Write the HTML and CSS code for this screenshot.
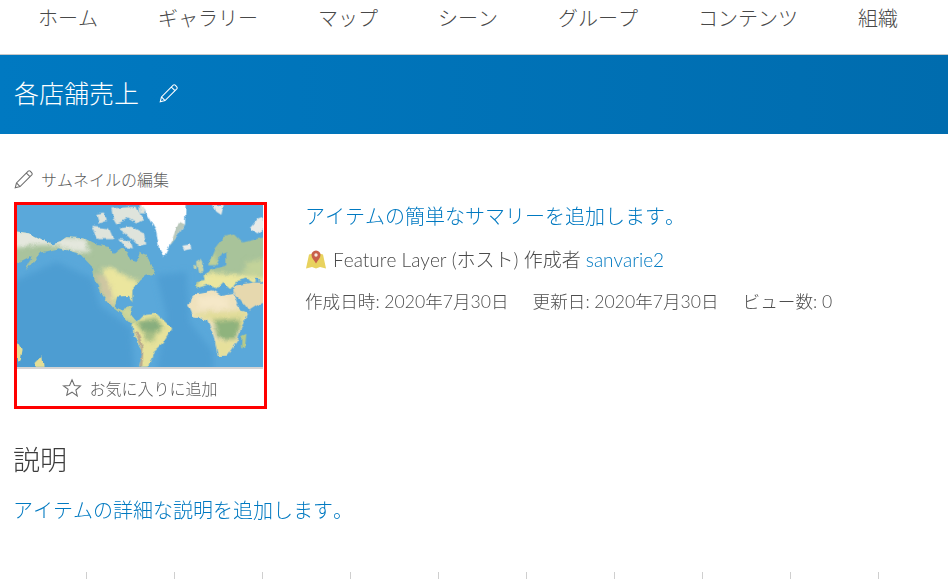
FILE: index.html
```
<!DOCTYPE html>
<html lang="ja">
<head>
<meta charset="utf-8">
<title>各店舗売上</title>
<link rel="stylesheet" href="styles.css">
</head>
<body>
<nav class="topnav">
  <a>ホーム</a><a>ギャラリー</a><a>マップ</a><a>シーン</a><a>グループ</a><a>コンテンツ</a><a>組織</a>
</nav>
<header class="banner">
  <h1 class="title">各店舗売上</h1>
  <svg class="pencil pencil-light" viewBox="0 0 24 24"><path d="M2.500 21.500l1.300-5.200L16.600 3.500a1.600 1.600 0 0 1 2.200 0l1.700 1.700a1.600 1.600 0 0 1 0 2.200L7.700 20.200zM14.600 5.500l3.900 3.900M3.800 16.300l3.900 3.900"/></svg>
</header>
<main class="content">
  <div class="thumb-edit">
    <svg class="pencil pencil-gray" viewBox="0 0 24 24"><path d="M2.500 21.500l1.300-5.200L16.600 3.500a1.600 1.600 0 0 1 2.200 0l1.700 1.700a1.600 1.600 0 0 1 0 2.200L7.700 20.200zM14.600 5.500l3.900 3.900M3.800 16.300l3.900 3.900"/></svg>
    <span>サムネイルの編集</span>
  </div>
  <section class="overview">
    <div class="card">
      <svg class="map" viewBox="52 120 738 485" preserveAspectRatio="none">
        <defs>
          <clipPath id="naClip"><path d="M40 198L90 205 130 225 160 238 178 232 200 216 250 220 290 240 330 246 345 266 368 250 385 262 395 285 412 290 420 262 442 272 466 325 440 332 422 346 398 375 398 412 388 392 352 394 345 428 370 440 384 420 400 425 392 448 412 470 400 482 372 452 340 428 302 382 284 340 280 308 240 266 180 250 122 262 78 318 96 272 40 300Z"/></clipPath>
          <clipPath id="afClip"><path d="M566 420L572 402 592 384 640 375 668 392 702 386 722 440 745 445 722 495 715 522 682 570 655 572 642 510 622 462 582 456Z"/></clipPath>
          <clipPath id="saClip"><path d="M398 482L430 450 470 445 518 490 492 530 462 558 445 605H418L428 560 402 510Z"/></clipPath>
          <clipPath id="euClip"><path d="M800 215L730 232 706 208 672 215 645 250 625 300 650 300 665 268 680 262 680 300 640 312 612 330 615 348 590 350 590 370 625 358 650 370 668 350 692 372 710 348 740 340 760 352 800 345Z"/></clipPath>
          <filter id="coast" x="-5%" y="-5%" width="110%" height="110%">
            <feTurbulence type="fractalNoise" baseFrequency="0.04" numOctaves="4" seed="7" result="n"/>
            <feDisplacementMap in="SourceGraphic" in2="n" scale="13" xChannelSelector="R" yChannelSelector="G"/>
            <feGaussianBlur stdDeviation="1.500"/>
          </filter>
          <filter id="blurA"><feGaussianBlur stdDeviation="9"/></filter>
          <filter id="blurB" x="-20%" y="-20%" width="140%" height="140%"><feGaussianBlur stdDeviation="7"/></filter>
        </defs>
        <rect x="52" y="120" width="738" height="485" fill="#5aa8da"/>
        <path fill="#4e9dd2" filter="url(#blurA)" d="M40 350L170 290 280 340 300 420 395 490 405 620H40Z"/>
        <path fill="#4f9ed3" filter="url(#blurA)" d="M470 330L560 320 570 470 640 560 640 620H470L500 450Z"/>
        <g filter="url(#coast)">
          <g clip-path="url(#naClip)">
            <rect x="40" y="190" width="440" height="300" fill="#a9c39d"/>
            <g filter="url(#blurB)">
              <path fill="#e4e7dd" d="M40 190H180V240L120 240 40 250ZM170 215L255 220 270 262 215 258 175 245Z"/>
              <path fill="#ebe69e" d="M305 308L345 312 390 340 418 345 405 380 395 420 345 400 345 425 320 400Z"/>
              <path fill="#cdd79a" d="M345 425L400 425 412 480 372 455Z"/>
            </g>
            <path fill="#cfc6a2" filter="url(#blurB)" d="M285 325L318 335 338 395 340 428 310 390Z"/>
          </g>
          <g fill="#dfe4dc">
            <path d="M290 150L312 145 322 168 298 176Z"/>
            <path d="M335 130L410 125 430 165 410 175 385 160 350 178 340 160Z"/>
            <path d="M278 185L328 190 342 222 296 222Z"/>
            <path d="M356 190L395 185 432 205 440 238 416 242 385 210Z"/>
            <path d="M358 222L392 225 400 250 378 246Z"/>
            <path d="M420 120H430L435 145H420Z"/>
          </g>
          <path fill="#fff" d="M420 110H558L556 178 532 215 510 240 492 276 478 250 470 200 450 165Z"/>
          <path fill="#b9c8bb" d="M538 170L556 178 532 215 512 240 526 200Z"/>
          <path fill="#e8ebe8" d="M640 120H672L665 150 650 140ZM750 190L775 160 790 155V195L770 205ZM548 242L572 238 575 252 555 256Z"/>
          <path fill="#c8d4a8" d="M592 292L606 284 612 318 598 322ZM582 300L592 300 590 312 582 312Z"/>
          <g clip-path="url(#euClip)">
            <rect x="580" y="200" width="230" height="180" fill="#a8c39a"/>
            <g filter="url(#blurB)">
              <path fill="#ebe79f" d="M585 385L612 322 700 328 800 335V385Z"/>
              <path fill="#c3d39a" d="M620 300L640 262 660 300ZM740 290L800 280V335L730 325Z"/>
            </g>
          </g>
          <path fill="#5aa8da" d="M732 344L748 342 746 352 732 352ZM768 338L778 338 776 362 768 360Z"/>
          <path fill="#e6d8ae" d="M700 362L760 352 800 352V410L776 418 748 436 720 400 702 385Z"/>
          <g clip-path="url(#afClip)">
            <rect x="550" y="365" width="210" height="215" fill="#efe2bd"/>
            <g filter="url(#blurB)">
              <path fill="#e2dd9a" d="M570 445L745 435V490L690 490 640 470Z"/>
              <path fill="#8fb37d" d="M640 468L722 460 712 520 688 522 655 520Z"/>
              <path fill="#e6e09b" d="M640 528L715 522 682 580H650Z"/>
              <path fill="#f5e8c8" d="M590 395L660 390 690 410 680 430 600 430Z"/>
            </g>
          </g>
          <path fill="#b7ca8a" d="M726 512L740 506 736 545 724 545Z"/>
          <g clip-path="url(#saClip)">
            <rect x="390" y="440" width="135" height="170" fill="#e6e29b"/>
            <g filter="url(#blurB)">
              <path fill="#88ae7e" d="M408 470L470 458 488 490 455 510 430 500Z"/>
              <path fill="#a9c086" d="M430 500L470 500 462 530 442 530Z"/>
            </g>
            <path fill="#bcac8e" d="M402 498L414 500 432 545 428 610 418 610 424 550Z"/>
          </g>
          <path fill="#e4de96" d="M52 528L66 552 60 585 52 592ZM108 592L128 572 132 605H108Z"/>
        </g>
      </svg>
      <div class="fav">
        <svg class="star" viewBox="0 0 24 24"><path d="M12 2.200l2.900 6.700 7.300.7-5.500 4.800 1.600 7.100L12 17l-6.300 3.700 1.600-7.100L1.800 9.600l7.300-.7z"/></svg>
        <span>お気に入りに追加</span>
      </div>
    </div>
    <div class="details">
      <a class="summary">アイテムの簡単なサマリーを追加します。</a>
      <p class="meta">
        <svg class="layer-icon" viewBox="0 0 22 20">
          <path fill="#e8d25e" d="M4 4.500L1 18.500 7 17 11 18.500 15 17 21 18.500 18 4.500 14 3.500H8Z"/>
          <path fill="#c8604a" d="M11 .5C8 .5 6.500 2.700 6.500 5c0 3 2.800 5.500 4.500 8.500 1.700-3 4.500-5.500 4.500-8.500C15.500 2.700 14 .5 11 .5Z"/>
          <circle cx="11" cy="5" r="1.700" fill="#f6e7dc"/>
        </svg>
        <span>Feature Layer (ホスト) 作成者 <a class="link">sanvarie2</a></span>
      </p>
      <p class="stats"><span>作成日時: 2020年7月30日</span><span>更新日: 2020年7月30日</span><span>ビュー数: 0</span></p>
    </div>
  </section>
  <h2 class="section-title">説明</h2>
  <a class="description">アイテムの詳細な説明を追加します。</a>
</main>
<div class="ticks"><i></i><i></i><i></i><i></i><i></i><i></i><i></i><i></i><i></i><i></i></div>
</body>
</html>
```
FILE: styles.css
```
html, body { margin: 0; height: 579px; overflow: hidden; background: #fff; }
body { font-family: "Lato", "Noto Sans CJK JP", sans-serif; font-kerning: none; font-weight: 300; color: #4a4a4a; }
a { color: inherit; text-decoration: none; }
svg { display: block; flex: none; }

.topnav { display: flex; gap: 60px; height: 54px; padding: 4px 0 0 38px; box-sizing: border-box; font-size: 20px; line-height: 28px; color: #484848; }
.banner { display: flex; align-items: center; height: 80px; padding: 0 0 4px 14px; box-sizing: border-box; border-top: 1px solid #c8c8c8; background: linear-gradient(90deg, #0079c1, #006cae); color: #fff; }
.title { margin: 0; font-size: 25px; line-height: 32px; font-weight: 300; }
.pencil { width: 22px; height: 22px; fill: none; stroke-width: 1.200; }
.pencil-light { margin-left: 19px; stroke: #fff; }
.pencil-gray { margin-left: -1px; stroke: #6e6e6e; }

.content { padding: 33px 0 0 14px; }
.thumb-edit { display: flex; align-items: center; gap: 6px; height: 24px; font-size: 16px; color: #5c5c5c; }
.overview { display: flex; gap: 38px; margin-top: 11px; }
.card { width: 247px; height: 201px; border: 3px solid #f00; background: #fff; flex: none; }
.map { width: 246px; height: 162px; border-bottom: 2px solid #d4d4d4; }
.fav { display: flex; align-items: center; justify-content: center; gap: 7px; height: 37px; font-size: 16px; color: #5c5c5c; padding-right: 1px; }
.star { width: 20px; height: 20px; fill: none; stroke: #6e6e6e; stroke-width: 1.300; }
.details { padding-top: 1px; }
.summary { display: block; font-size: 20px; line-height: 26px; color: #0079c1; }
.meta { display: flex; align-items: center; gap: 6px; margin: 19px 0 0; font-size: 19px; line-height: 24px; color: #4a4a4a; }
.layer-icon { width: 22px; height: 20px; }
.link { color: #0079c1; }
.stats { display: flex; gap: 24px; margin: 18px 0 0; font-size: 17.6px; line-height: 24px; color: #4e4e4e; }
.section-title { margin: 31px 0 0 -1px; font-size: 27px; line-height: 40px; font-weight: 300; color: #3c3c3c; }
.description { display: block; margin: 16px 0 0 -1px; font-size: 20px; line-height: 28px; color: #0079c1; }

.ticks { display: flex; margin-top: 48px; padding-left: 86px; }
.ticks i { width: 87px; height: 7px; border-left: 1px solid #cfcfcf; flex: none; }
```
